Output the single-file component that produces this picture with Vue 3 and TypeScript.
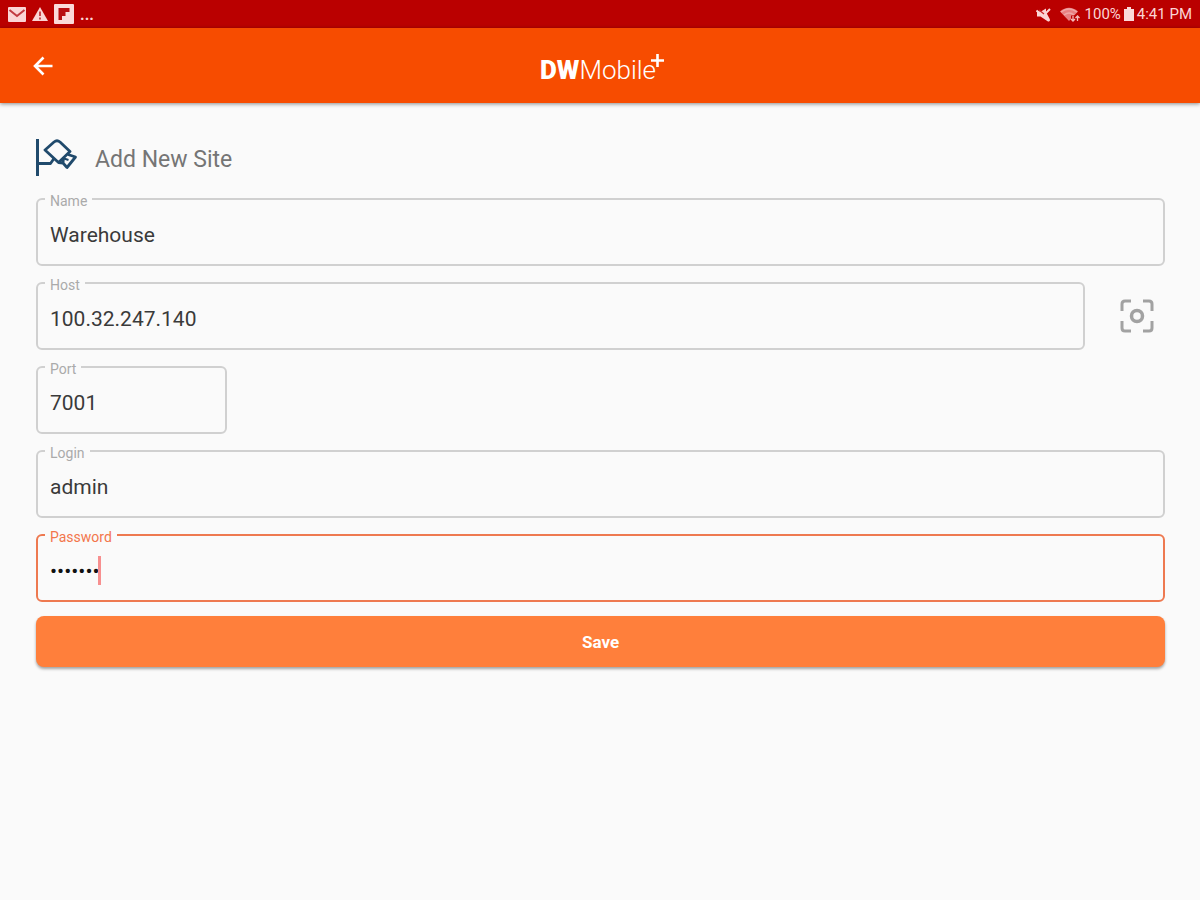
<script setup lang="ts">
import { reactive } from 'vue'

interface Site {
  name: string
  host: string
  port: string
  login: string
  password: string
}

const site = reactive<Site>({
  name: 'Warehouse',
  host: '100.32.247.140',
  port: '7001',
  login: 'admin',
  password: 'site123',
})
</script>

<template>
  <div class="screen">
    <div class="status">
      <div class="status-group">
        <svg class="mail" width="18" height="15" viewBox="0 0 18 15">
          <rect width="18" height="15" rx="1" fill="#fbd5d5" />
          <path d="M1.5 3l7.5 6 7.5-6" fill="none" stroke="#c23a40" stroke-width="2" />
        </svg>
        <svg width="16" height="14" viewBox="0 0 16 14">
          <path d="M8 0l8 14H0z" fill="#fbd5d5" />
          <path d="M8 4.500v4.500M8 10.500v2" stroke="#c23a40" stroke-width="1.800" />
        </svg>
        <svg width="20" height="20" viewBox="0 0 20 20">
          <rect width="20" height="20" rx="1" fill="#fbdada" />
          <path d="M4.500 4h11v4h-4v4h-3.500v4H4.500z" fill="#b80c10" />
        </svg>
        <span class="more">...</span>
      </div>
      <div class="status-group right">
        <svg class="mute" width="15" height="15" viewBox="0 0 15 15">
          <path d="M1 4.500h4L10 1.500v3.500l4 7.500-2 2L4.500 9.500H1z" fill="#fbd5d5" />
          <path d="M0.500 3.500L13.500 14M9.500 6.500L14 2" stroke="#fbd5d5" stroke-width="2" />
          <path d="M3 3l5 4" stroke="#c8282c" stroke-width="1.200" />
        </svg>
        <svg class="wifi" width="20" height="15" viewBox="0 0 20 15">
          <path d="M0 4.500Q9 -3 18 4.500L9 14z" fill="#e88082" />
          <path d="M1 5Q9 -1 17 5M4 8q5-4 10 0" fill="none" stroke="#f0a6a6" stroke-width="1.500" />
          <path d="M11 15V8.500h9V15z" fill="#ba0000" />
          <path d="M13 14V9M11 12l2 2 2-2M17.500 9v5M15.500 11l2-2 2 2" fill="none" stroke="#f5bcbc" stroke-width="1.300" />
        </svg>
        <span>100%</span>
        <svg class="battery" width="10" height="14" viewBox="0 0 10 14">
          <path d="M3 0h4v2h3v12H0V2h3z" fill="#fbdada" />
        </svg>
        <span>4:41 PM</span>
      </div>
    </div>

    <header class="bar">
      <button class="back" type="button" aria-label="Back">
        <svg width="20" height="20" viewBox="0 0 20 20" fill="none" stroke="#fff" stroke-width="2.600">
          <path d="M19.500 10H2.500M10.500 1.500L2 10l8.500 8.500" />
        </svg>
      </button>
      <div class="logo"><b>DW</b><span>Mobile</span><svg width="13" height="13" viewBox="0 0 13 13">
        <path d="M6.500 0v13M0 6.500h13" stroke="#fff" stroke-width="2.600" />
      </svg></div>
    </header>

    <main class="content">
      <div class="heading">
        <svg width="42" height="38" viewBox="0 0 42 38" fill="none" stroke="#204a6c" stroke-width="2.800" stroke-linejoin="round">
          <path d="M1.500 0v37" stroke-width="3" />
          <path d="M3 24.500h11.500l3.500-5" />
          <path d="M9 11L18 3q3-2.500 6 0L34 12.500 22.500 23.500z" />
          <path d="M32 15.500l7.500 2.500-8.500 10.500-4-4.500 0.500-5.500M27 24l-4.500-0.500" />
          <path d="M28 19.500l4.500 1.500" stroke-width="2" />
        </svg>
        <h1>Add New Site</h1>
      </div>

      <form class="form" @submit.prevent>
        <div class="field">
          <label for="name">Name</label>
          <input id="name" v-model="site.name" type="text" />
        </div>
        <div class="host-row">
          <div class="field">
            <label for="host">Host</label>
            <input id="host" v-model="site.host" type="text" />
          </div>
          <button class="scan" type="button" aria-label="Scan">
            <svg width="34" height="34" viewBox="0 0 34 34" fill="none" stroke="#a2a2a2" stroke-width="3">
              <path d="M2 12V5q0-3 3-3h6M23 2h6q3 0 3 3v7M32 22v7q0 3-3 3h-6M11 32H5q-3 0-3-3v-7" />
              <circle cx="17" cy="17" r="5.500" stroke-width="3.500" />
            </svg>
          </button>
        </div>
        <div class="field port">
          <label for="port">Port</label>
          <input id="port" v-model="site.port" type="text" inputmode="numeric" />
        </div>
        <div class="field">
          <label for="login">Login</label>
          <input id="login" v-model="site.login" type="text" />
        </div>
        <div class="field active">
          <label for="password">Password</label>
          <input id="password" v-model="site.password" type="password" />
          <i class="caret"></i>
        </div>
        <button class="save" type="submit">Save</button>
      </form>
    </main>
  </div>
</template>

<style>
body {
  margin: 0;
  background: #fafafa;
}
</style>

<style scoped>
.screen {
  min-height: 100vh;
  background: #fafafa;
  font-family: Roboto, "Liberation Sans", sans-serif;
}
.status {
  display: flex;
  justify-content: space-between;
  align-items: center;
  height: 28px;
  padding: 0 8px;
  background: #ba0000;
  color: #fbd5d5;
  font-size: 15px;
}
.status-group {
  display: flex;
  align-items: center;
  gap: 6px;
}
.more {
  font-size: 16px;
  font-weight: 700;
}
.right {
  gap: 3px;
}
.wifi {
  margin: 0 2px 0 6px;
}
.bar {
  position: relative;
  display: flex;
  align-items: center;
  justify-content: center;
  height: 75px;
  background: #f74c00;
  box-shadow: 0 1px 4px rgba(0, 0, 0, 0.45);
}
.back {
  position: absolute;
  left: 33px;
  top: 28px;
  display: flex;
  padding: 0;
  border: 0;
  background: none;
}
.logo {
  display: flex;
  align-items: center;
  color: #fff;
  line-height: 32px;
  padding: 8px 0 0 4px;
}
.logo b {
  font-size: 26px;
  font-weight: 900;
}
.logo span {
  font-size: 26px;
  font-weight: 300;
}
.logo svg {
  align-self: flex-start;
  margin-left: -5px;
}
.content {
  padding: 35px 35px 0 36px;
}
.heading {
  display: flex;
  align-items: center;
  gap: 17px;
  height: 40px;
}
h1 {
  margin: 0;
  padding-top: 2px;
  color: #757575;
  font-size: 23px;
  font-weight: 400;
}
.form {
  display: flex;
  flex-direction: column;
  gap: 16px;
  margin-top: 20px;
}
.field {
  position: relative;
  flex: 1;
}
.field label {
  position: absolute;
  left: 9px;
  top: -5px;
  padding: 0 5px;
  background: #fafafa;
  color: #aaa;
  font-size: 14px;
  line-height: 16px;
}
.field input {
  display: block;
  box-sizing: border-box;
  width: 100%;
  height: 68px;
  padding: 6px 12px 0;
  border: 2px solid #d0d0d0;
  border-radius: 6px;
  outline: 0;
  background: transparent;
  color: #3a3a3a;
  font: 400 21px Roboto, "Liberation Sans", sans-serif;
}
.host-row {
  display: flex;
  align-items: center;
}
.scan {
  display: flex;
  margin: 0 11px 0 35px;
  padding: 0;
  border: 0;
  background: none;
}
.port {
  width: 191px;
}
.active label {
  color: #f3764c;
}
.field.active input {
  border-color: #ee7950;
  color: #111;
}
.caret {
  position: absolute;
  left: 62px;
  top: 22px;
  width: 3px;
  height: 29px;
  background: #f78f8f;
}
.save {
  height: 51px;
  margin-top: -2px;
  border: 0;
  border-radius: 8px;
  background: #ff7f3b;
  box-shadow: 0 2px 3px rgba(0, 0, 0, 0.35);
  color: #fff;
  font: 700 17px Roboto, "Liberation Sans", sans-serif;
}
</style>
